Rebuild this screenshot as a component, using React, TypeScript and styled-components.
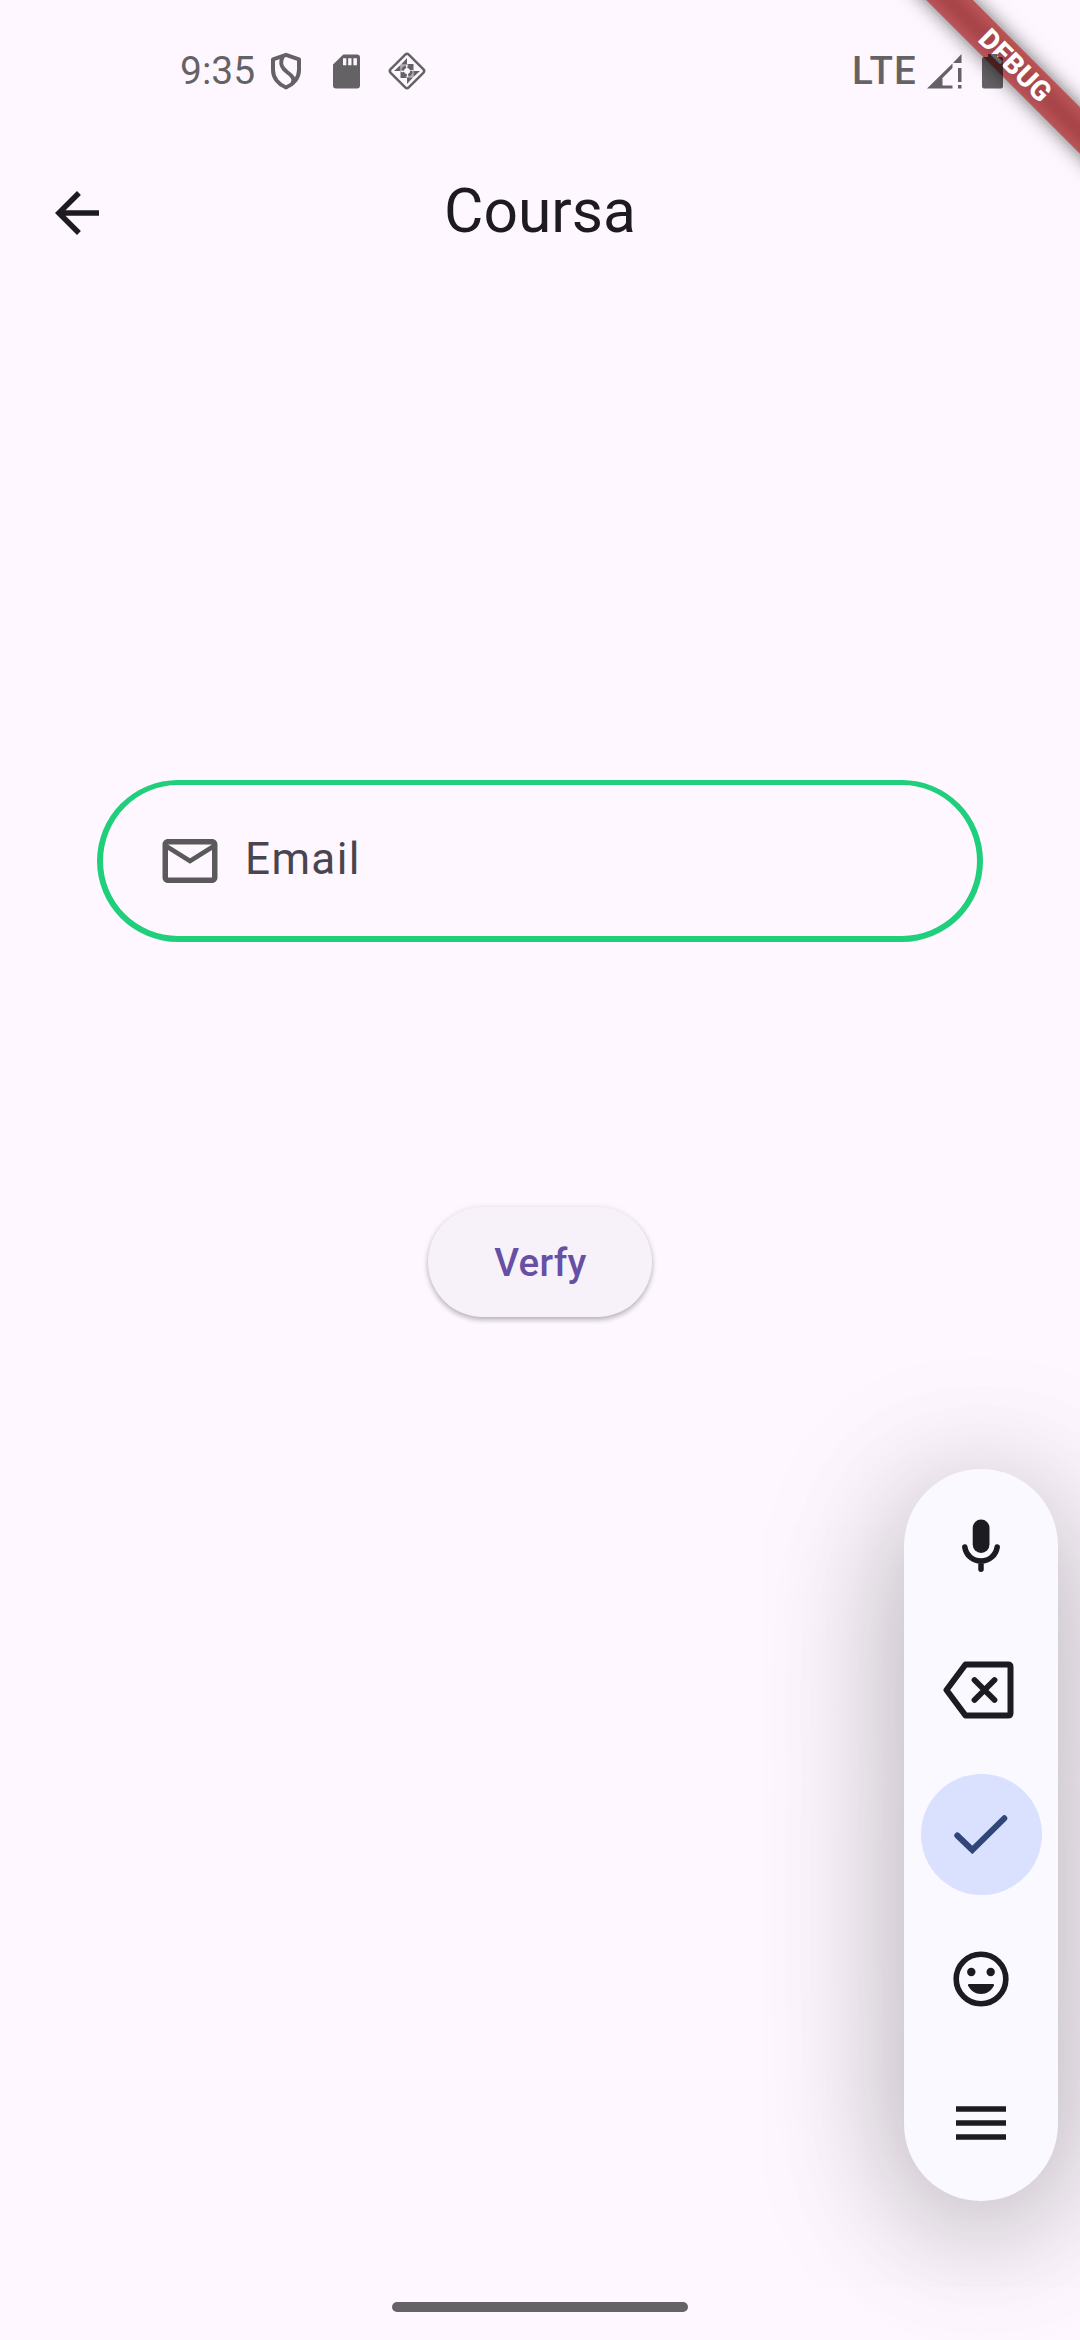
import React from "react";
import styled, { createGlobalStyle } from "styled-components";

const GlobalStyle = createGlobalStyle`
  html, body { margin: 0; padding: 0; background: #fef7ff; }
  body { overflow: hidden; }
  * { box-sizing: border-box; }
`;

const Screen = styled.div`
  position: relative;
  display: flex;
  flex-direction: column;
  align-items: stretch;
  width: 1080px;
  height: 2340px;
  overflow: hidden;
  background: #fef7ff;
  font-family: Roboto, "Noto Sans", sans-serif;
  svg { display: block; flex: none; }
`;

const StatusBar = styled.header`
  position: relative;
  z-index: 3;
  flex: none;
  display: flex;
  justify-content: space-between;
  height: 136px;
  padding: 48px 77px 0 180px;
  color: #000;
  opacity: 0.6;
`;

const StatusGroup = styled.div<{ $gap: number }>`
  display: flex;
  align-items: center;
  gap: ${(p) => p.$gap}px;
  height: 46px;
`;

const StatusIcons = styled.div`
  display: grid;
  grid-template-columns: 63.5px 54px 40px;
  align-items: center;
`;

const Clock = styled.span`
  width: 89.5px;
  font-size: 39px;
  line-height: 46px;
  white-space: nowrap;
`;

const Network = styled.span`
  margin-right: -10px;
  font-size: 38.5px;
  font-weight: 500;
  line-height: 46px;
  letter-spacing: 1.2px;
`;

const AppBar = styled.nav`
  flex: none;
  display: grid;
  grid-template-columns: 154px 1fr 154px;
  align-items: center;
  height: 154px;
`;

const IconButton = styled.button`
  display: flex;
  align-items: center;
  justify-content: center;
  width: 154px;
  height: 154px;
  padding: 0;
  border: 0;
  background: none;
  color: #1d1b20;
`;

const Title = styled.h1`
  margin: 0;
  padding-bottom: 4px;
  text-align: center;
  font-size: 60.5px;
  font-weight: 400;
  line-height: 77px;
  color: #1d1b20;
`;

const Body = styled.main`
  flex: 1;
  display: flex;
  flex-direction: column;
  align-items: center;
  padding-top: 490px;
`;

const Field = styled.label`
  display: flex;
  align-items: center;
  gap: 22px;
  width: 886px;
  height: 162px;
  padding-left: 54px;
  border: solid #20cf7c;
  border-width: 5px 6px 6px;
  border-radius: 82px;
  color: #5a5a5a;
`;

const FieldLabel = styled.span`
  margin-top: -4px;
  font-size: 44px;
  line-height: 66px;
  letter-spacing: 1.375px;
  color: #49454f;
`;

const VerifyButton = styled.button`
  width: 224px;
  height: 110px;
  margin-top: 265px;
  padding: 0 0 0 1px;
  border: 0;
  border-radius: 55px;
  background: #f7f2fa;
  box-shadow: 0 3px 5px rgba(0, 0, 0, 0.22), 0 1px 7px rgba(0, 0, 0, 0.1);
  font-family: inherit;
  font-size: 38.5px;
  font-weight: 500;
  letter-spacing: 0.275px;
  color: #6750a4;
`;

const HomeIndicator = styled.div`
  flex: none;
  align-self: center;
  width: 296px;
  height: 10px;
  margin-bottom: 28px;
  border-radius: 5px;
  background: #666366;
`;

const KeyboardPanel = styled.aside`
  position: absolute;
  top: 1469px;
  right: 22px;
  z-index: 2;
  display: flex;
  flex-direction: column;
  align-items: center;
  width: 154px;
  height: 732px;
  padding: 5px 0 6px;
  border-radius: 77px;
  background: #f9f9ff;
  box-shadow: 0 25px 120px rgba(0, 0, 0, 0.22), 0 20px 175px rgba(0, 0, 0, 0.14);
`;

const Key = styled.button<{ $nudge?: number }>`
  flex: 1;
  display: flex;
  align-items: center;
  justify-content: center;
  width: 154px;
  padding: 0 ${(p) => p.$nudge ?? 0}px 0 0;
  border: 0;
  background: none;
  color: #1b1b21;
`;

const Accent = styled.span`
  display: flex;
  align-items: center;
  justify-content: center;
  width: 121px;
  height: 121px;
  border-radius: 50%;
  background: #dae1ff;
  color: #304578;
`;

const BannerCorner = styled.div`
  position: absolute;
  top: 0;
  right: 0;
  z-index: 1;
  width: 220px;
  height: 220px;
  overflow: hidden;
`;

const Banner = styled.div`
  position: absolute;
  top: 49.35px;
  left: -21.5px;
  width: 352px;
  height: 33px;
  transform: rotate(45deg);
  background: linear-gradient(#ba5457, #a94649 40%, #a94649 60%, #ba5457);
  box-shadow: 0 0 19px rgba(0, 0, 0, 0.58);
  text-align: center;
  font-size: 28px;
  font-weight: 800;
  line-height: 33px;
  color: #fff;
`;

const ShieldIcon = () => (
  <svg width="32" height="38" viewBox="0 0 32 38" fill="none" stroke="currentColor" strokeWidth="4" strokeLinejoin="round">
    <path d="M16 2.8 L29 7.3 V18 C29 26 23.5 32.5 16 35.5 C8.500 32.500 3 26 3 18 V7.300 Z" />
    <path d="M13 4 C9.500 11 11 15.500 17 20 C22.500 24 25 27 22.500 31.500" />
  </svg>
);

const SdIcon = () => (
  <svg width="27" height="35" viewBox="0 0 27 35" fill="currentColor">
    <path fillRule="evenodd" d="M10.300 0.500 H24 A3 3 0 0 1 27 3.500 V31.500 A3 3 0 0 1 24 34.500 H3 A3 3 0 0 1 0 31.500 V10.500 Z M10 4.300 V11.300 H13.300 V4.300 Z M15.200 4.300 V11.300 H18.500 V4.300 Z M20.400 4.300 V11.300 H23.900 V4.300 Z" />
  </svg>
);

const DiamondIcon = () => (
  <svg width="40" height="40" viewBox="-20 -20 40 40">
    <rect x="-12.800" y="-12.800" width="25.600" height="25.600" rx="2.500" transform="rotate(45)" fill="none" stroke="currentColor" strokeWidth="2.500" />
    <g fill="currentColor">
      <path d="M0 -13 V-6.500 H-6 Z" />
      <path d="M0 13 V6.500 H6 Z" />
      <path d="M-13 0 H-6.500 V-6 Z" />
      <path d="M13 0 H6.500 V6 Z" />
      <path d="M6.500 -7 V0 L0 -7 Z" />
      <path d="M-6.500 7 V0 L0 7 Z" />
      <path d="M-6.500 -6.500 H0 L-6.500 0 Z" opacity="0.500" />
      <path d="M6.500 6.500 H0 L6.500 0 Z" opacity="0.500" />
    </g>
    <circle r="4.400" fill="none" stroke="currentColor" strokeWidth="2.600" strokeDasharray="5.400 1.500" />
  </svg>
);

const SignalIcon = () => (
  <svg width="35" height="35" viewBox="0 0 35 35" fill="currentColor">
    <path d="M34.500 0 V9 H26 Z" />
    <path fillRule="evenodd" d="M25.500 9.500 V14 L15.500 24 V31.500 H25.500 V34.500 H0 Z" />
    <path d="M31 14 H34.500 V28 H31 Z M31 31 H34.500 V34.500 H31 Z" />
  </svg>
);

const BatteryIcon = () => (
  <svg width="21" height="35" viewBox="0 0 21 35" fill="currentColor">
    <path d="M6 0 H15 V3 H19 A2 2 0 0 1 21 5 V32.500 A2 2 0 0 1 19 34.500 H2 A2 2 0 0 1 0 32.500 V5 A2 2 0 0 1 2 3 H6 Z" />
  </svg>
);

const BackIcon = () => (
  <svg width="66" height="66" viewBox="0 0 24 24" fill="currentColor">
    <path d="M20 11H7.830l5.590-5.590L12 4l-8 8 8 8 1.410-1.410L7.830 13H20v-2z" />
  </svg>
);

const MailIcon = () => (
  <svg width="66" height="66" viewBox="0 0 24 24" fill="currentColor">
    <path d="M22 6c0-1.100-.9-2-2-2H4c-1.100 0-2 .9-2 2v12c0 1.100.9 2 2 2h16c1.100 0 2-.9 2-2V6zm-2 0l-8 5-8-5h16zm0 12H4V8l8 5 8-5v10z" />
  </svg>
);

const MicIcon = () => (
  <svg width="38" height="54" viewBox="0 0 38 54">
    <rect x="10.700" y="0.500" width="16.800" height="33.500" rx="8.400" fill="currentColor" />
    <path d="M2.800 28 C4 36 10.500 42 19 42 C27.500 42 34 36 35.200 28 M19 42 V50.300" fill="none" stroke="currentColor" strokeWidth="5.500" strokeLinecap="round" />
  </svg>
);

const BackspaceIcon = () => (
  <svg width="71" height="58" viewBox="0 0 71 58" fill="none" stroke="currentColor" strokeLinejoin="round" strokeLinecap="round">
    <path d="M22.500 3.500 H65 Q67.500 3.500 67.500 6 V52 Q67.500 54.500 65 54.500 H22.500 L3.500 29 Z" strokeWidth="6" />
    <path d="M31.500 19 L51.500 39 M51.500 19 L31.500 39" strokeWidth="5.800" />
  </svg>
);

const CheckIcon = () => (
  <svg width="54" height="39" viewBox="0 0 54 39" fill="none" stroke="currentColor" strokeWidth="6" strokeLinecap="round">
    <path d="M3.300 20.500 L18.300 35 L50.300 3.300" />
  </svg>
);

const SmileIcon = () => (
  <svg width="56" height="56" viewBox="0 0 56 56" fill="currentColor">
    <circle cx="28" cy="28" r="24.800" fill="none" stroke="currentColor" strokeWidth="5.600" />
    <circle cx="18.300" cy="21" r="4.200" />
    <circle cx="37.700" cy="21" r="4.200" />
    <path d="M16 33 H40 Q41.500 33 41 34.500 C38.500 39.500 33.500 43 28 43 C22.500 43 17.500 39.500 15 34.500 Q14.500 33 16 33 Z" />
  </svg>
);

const MenuIcon = () => (
  <svg width="50" height="34" viewBox="0 0 50 34" fill="currentColor">
    <path d="M0 0.200 H50 V5.800 H0 Z M0 14.200 H50 V19.800 H0 Z M0 28.200 H50 V33.800 H0 Z" />
  </svg>
);

export default function App() {
  return (
    <>
      <GlobalStyle />
      <Screen>
        <StatusBar>
          <StatusGroup $gap={0}>
            <Clock>9:35</Clock>
            <StatusIcons>
              <ShieldIcon />
              <SdIcon />
              <DiamondIcon />
            </StatusIcons>
          </StatusGroup>
          <StatusGroup $gap={20}>
            <Network>LTE</Network>
            <SignalIcon />
            <BatteryIcon />
          </StatusGroup>
        </StatusBar>
        <AppBar>
          <IconButton aria-label="Back">
            <BackIcon />
          </IconButton>
          <Title>Coursa</Title>
        </AppBar>
        <Body>
          <Field>
            <MailIcon />
            <FieldLabel>Email</FieldLabel>
          </Field>
          <VerifyButton>Verfy</VerifyButton>
        </Body>
        <HomeIndicator />
        <KeyboardPanel>
          <Key aria-label="Voice"><MicIcon /></Key>
          <Key aria-label="Backspace" $nudge={5}><BackspaceIcon /></Key>
          <Key aria-label="Done"><Accent><CheckIcon /></Accent></Key>
          <Key aria-label="Emoji"><SmileIcon /></Key>
          <Key aria-label="Menu"><MenuIcon /></Key>
        </KeyboardPanel>
        <BannerCorner>
          <Banner>DEBUG</Banner>
        </BannerCorner>
      </Screen>
    </>
  );
}
